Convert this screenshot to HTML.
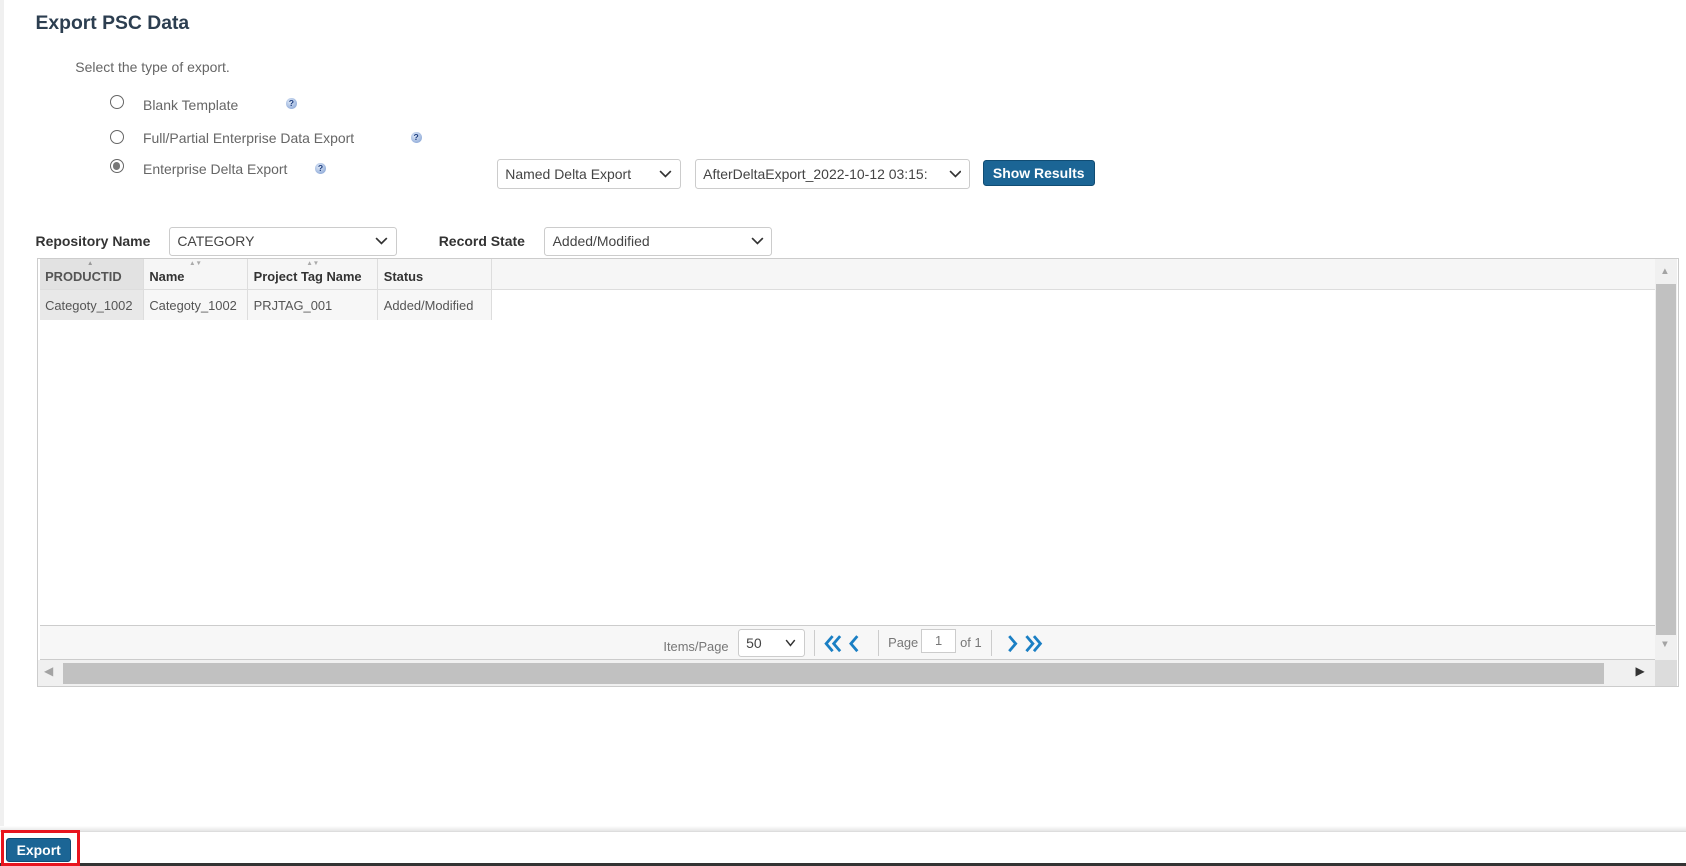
<!DOCTYPE html>
<html><head><meta charset="utf-8"><style>
*{box-sizing:border-box;margin:0;padding:0}
html,body{width:1686px;height:866px;overflow:hidden;background:#fff;font-family:"Liberation Sans",sans-serif}
#w{zoom:1.0753;position:relative;width:1568px;height:805px}
.a{position:absolute;white-space:nowrap}
.t{font-size:13px;color:#666}
.sel{position:absolute;border:1px solid #ccc;border-radius:3px;background:#fff;font-size:13px;color:#444;padding-left:7px;display:flex;align-items:center}
.sel svg{position:absolute;right:7px;top:50%;margin-top:-4px}
.rad{position:absolute;width:13px;height:13px;border:1px solid #666;border-radius:50%;background:#fff}
.help{position:absolute;width:10px;height:10px;border-radius:50%;background:radial-gradient(circle at 40% 35%,#dfe9f8,#7b9bd0);font-size:8px;color:#1f3f80;font-weight:bold;text-align:center;line-height:10px}
.btn{position:absolute;background:#1b6595;color:#fff;font-weight:bold;font-size:13px;border-radius:3px;border:1px solid #104c73;display:flex;align-items:center;justify-content:center}
.th{position:absolute;top:0;height:28px;border-right:1px solid #ddd;font-size:12px;font-weight:bold;color:#333;padding:9px 0 0 5px}
.td{position:absolute;top:29px;height:28px;border-right:1px solid #ddd;font-size:12px;color:#555;padding:7px 0 0 5px}
</style></head><body><div id="w">
<div class="a" style="left:0;top:0;width:4px;height:770px;background:#f0f0f0"></div>
<div class="a" style="left:33px;top:11px;font-size:18px;font-weight:bold;color:#2c3e50">Export PSC Data</div>
<div class="a t" style="left:70px;top:55px">Select the type of export.</div>
<div class="rad" style="left:102px;top:88px"></div>
<div class="a t" style="left:133px;top:90px">Blank Template</div>
<div class="help" style="left:266px;top:91px">?</div>
<div class="rad" style="left:102px;top:121px"></div>
<div class="a t" style="left:133px;top:121px">Full/Partial Enterprise Data Export</div>
<div class="help" style="left:382px;top:123px">?</div>
<div class="rad" style="left:102px;top:148px"><div style="position:absolute;left:2px;top:2px;width:7px;height:7px;border-radius:50%;background:#777"></div></div>
<div class="a t" style="left:133px;top:150px">Enterprise Delta Export</div>
<div class="help" style="left:293px;top:152px">?</div>
<div class="sel" style="left:462px;top:148px;width:171px;height:28px">Named Delta Export<svg width="12" height="8"><path d="M1 1l5 5 5-5" stroke="#333" stroke-width="1.6" fill="none"/></svg></div>
<div class="sel" style="left:646px;top:148px;width:256px;height:28px;overflow:hidden">AfterDeltaExport_2022-10-12 03:15:<svg width="12" height="8" style="background:#fff"><path d="M1 1l5 5 5-5" stroke="#333" stroke-width="1.6" fill="none"/></svg></div>
<div class="btn" style="left:914px;top:149px;width:104px;height:24px">Show Results</div>
<div class="a" style="left:33px;top:217px;font-size:13px;font-weight:bold;color:#333">Repository Name</div>
<div class="sel" style="left:157px;top:211px;width:212px;height:27px">CATEGORY<svg width="12" height="8"><path d="M1 1l5 5 5-5" stroke="#333" stroke-width="1.6" fill="none"/></svg></div>
<div class="a" style="left:408px;top:217px;font-size:13px;font-weight:bold;color:#333">Record State</div>
<div class="sel" style="left:506px;top:211px;width:212px;height:27px">Added/Modified<svg width="12" height="8"><path d="M1 1l5 5 5-5" stroke="#333" stroke-width="1.6" fill="none"/></svg></div>
<!-- grid -->
<div class="a" style="left:34px;top:240px;width:1527px;height:399px;border:1px solid #ccc;background:#fff">
 <div class="a" style="left:2px;top:0;width:1502px;height:29px;background:#f6f6f6;border-bottom:1px solid #ddd"></div>
 <div class="a" style="left:2px;top:0;width:1502px;height:340px">
  <div class="th" style="left:0;width:97px;background:#e2e2e2;color:#555">PRODUCTID</div>
  <div class="th" style="left:97px;width:97px">Name</div>
  <div class="th" style="left:194px;width:121px">Project Tag Name</div>
  <div class="th" style="left:315px;width:106px">Status</div>
  <div class="a" style="left:44px;top:1px;font-size:6px;color:#999">▲</div>
  <div class="a" style="left:139px;top:1px;font-size:6px;color:#aaa">▲▼</div>
  <div class="a" style="left:248px;top:1px;font-size:6px;color:#aaa">▲▼</div>
  <div class="td" style="left:0;width:97px;background:#e8e8e8">Categoty_1002</div>
  <div class="td" style="left:97px;width:97px;background:#f7f7f7">Categoty_1002</div>
  <div class="td" style="left:194px;width:121px;background:#f7f7f7">PRJTAG_001</div>
  <div class="td" style="left:315px;width:106px;background:#f7f7f7">Added/Modified</div>
 </div>
 <div class="a" style="left:2px;top:340px;width:1502px;height:33px;background:#f7f7f7;border-top:1px solid #ccc;border-bottom:1px solid #ccc"></div>
 <div class="a" style="left:582px;top:353px;font-size:12px;color:#777">Items/Page</div>
 <div class="sel" style="left:651px;top:344px;width:63px;height:26px">50<svg width="12" height="8"><path d="M2 1l4 5 4-5" stroke="#333" stroke-width="1.4" fill="none"/></svg></div>
 <div class="a" style="left:722px;top:345px;width:1px;height:24px;background:#ccc"></div>
 <svg class="a" style="left:731px;top:349px" width="40" height="18"><path d="M8 2l-6 7 6 7M15 2l-6 7 6 7M31 2l-6 7 6 7" stroke="#1a7fc4" stroke-width="2.6" fill="none"/></svg>
 <div class="a" style="left:782px;top:345px;width:1px;height:24px;background:#ccc"></div>
 <div class="a" style="left:791px;top:350px;font-size:12px;color:#777">Page</div>
 <div class="a" style="left:822px;top:344px;width:32px;height:22px;border:1px solid #ccc;background:#fff;font-size:12px;color:#777;text-align:center;line-height:20px">1</div>
 <div class="a" style="left:858px;top:350px;font-size:12px;color:#777">of 1</div>
 <div class="a" style="left:887px;top:345px;width:1px;height:24px;background:#ccc"></div>
 <svg class="a" style="left:901px;top:349px" width="40" height="18"><path d="M3 2l6 7-6 7M19 2l6 7-6 7M26 2l6 7-6 7" stroke="#1a7fc4" stroke-width="2.6" fill="none"/></svg>
 <!-- vscroll -->
 <div class="a" style="left:1504px;top:0;width:21px;height:373px;background:#f0f0f0"></div>
 <div class="a" style="left:1505px;top:23px;width:19px;height:327px;background:#c1c1c1"></div>
 <div class="a" style="left:1509px;top:6px;font-size:9px;color:#a3a3a3">▲</div>
 <div class="a" style="left:1509px;top:353px;font-size:9px;color:#a3a3a3">▼</div>
 <!-- hscroll -->
 <div class="a" style="left:0;top:373px;width:1504px;height:24px;background:#f0f0f0"></div>
 <div class="a" style="left:24px;top:376px;width:1433px;height:19px;background:#c1c1c1"></div>
 <div class="a" style="left:6px;top:377px;font-size:11px;color:#a3a3a3">◀</div>
 <div class="a" style="left:1486px;top:377px;font-size:11px;color:#333">▶</div>
 <div class="a" style="left:1504px;top:373px;width:21px;height:24px;background:#dcdcdc"></div>
</div>
<!-- footer -->
<div class="a" style="left:0;top:768px;width:1568px;height:5px;background:linear-gradient(#fff,#e6e6e6)"></div>
<div class="a" style="left:0;top:773px;width:1568px;height:1px;background:#ddd"></div>
<div class="a" style="left:0;top:803px;width:1568px;height:2px;background:#333"></div>
<div class="a" style="left:1px;top:772px;width:73px;height:33px;border:3px solid #e8141e"></div>
<div class="btn" style="left:6px;top:779px;width:60px;height:23px">Export</div>
</div></body></html>
